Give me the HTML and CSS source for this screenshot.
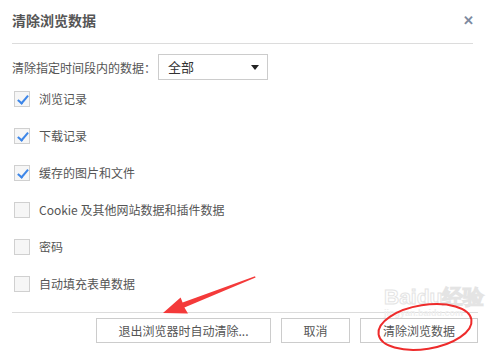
FILE: index.html
```html
<!DOCTYPE html>
<html>
<head>
    <title>清除浏览数据</title>
    <link rel="stylesheet" href="styles.css">
</head>
<body>
    <div class="dialog">
        <header class="head">
            <h1>清除浏览数据</h1>
            <span class="close">&#x2715;</span>
        </header>
        <div class="range">
            <span>清除指定时间段内的数据：</span>
            <div class="select">全部<span class="caret"></span></div>
        </div>
        <ul class="opts">
            <li><span class="box on"></span>浏览记录</li>
            <li><span class="box on"></span>下载记录</li>
            <li><span class="box on"></span>缓存的图片和文件</li>
            <li><span class="box"></span>Cookie 及其他网站数据和插件数据</li>
            <li><span class="box"></span>密码</li>
            <li><span class="box"></span>自动填充表单数据</li>
        </ul>
        <footer class="foot">
            <button class="btn wide">退出浏览器时自动清除...</button>
            <button class="btn">取消</button>
            <button class="btn main">清除浏览数据</button>
        </footer>
    </div>

    <!-- annotations drawn over the screenshot -->
    <div class="mark">Baidu经验<small>jingyan.baidu.com</small></div>
    <svg class="ink" width="489" height="354" viewBox="0 0 489 354">
        <polygon fill="#f43a3a" points="163,313 180.6,297.6 182.6,302.5 255,276.3 255.6,277.6 184.4,307.5 188,313.5"/>
        <ellipse cx="425" cy="327" rx="47" ry="22" fill="none" stroke="#ee2b2b" stroke-width="2" transform="rotate(-9 425 327)"/>
    </svg>
</body>
</html>
```

FILE: styles.css
```css
body, html {
    margin: 0;
    padding: 0;
    background: #fff;
    font-family: "Noto Sans CJK SC", "Noto Sans", sans-serif;
    font-size: 12px;
    color: #555;
}
.dialog {
    padding: 0 16px 0 12px;
}
.head {
    display: flex;
    align-items: center;
    justify-content: space-between;
    height: 43px;
    border-bottom: 1px solid #dcdcdc;
}
.head h1 {
    margin: -4px 0 0;
    font-size: 14px;
    font-weight: bold;
    color: #555;
}
.close {
    margin: -4px -1px 0 0;
    color: #7d8aa0;
    font-size: 13px;
    font-weight: bold;
}
.range {
    display: flex;
    align-items: center;
    margin-top: 10px;
}
.range span {
    margin-right: 2px;
}
.select {
    position: relative;
    box-sizing: border-box;
    width: 110px;
    height: 26px;
    line-height: 24px;
    padding-left: 9px;
    border: 1px solid #ccc;
    font-size: 13px;
    color: #333;
}
.caret {
    position: absolute;
    right: 6px;
    top: 10px;
    border-left: 4px solid transparent;
    border-right: 4px solid transparent;
    border-top: 5px solid #222;
}
.opts {
    list-style: none;
    margin: 0;
    padding: 0;
}
.opts li {
    display: flex;
    align-items: center;
    height: 37px;
}
.box {
    position: relative;
    box-sizing: border-box;
    width: 16px;
    height: 16px;
    margin: 0 9px 0 2px;
    border: 1px solid #d0d0d0;
    background: #f6f6f6;
}
.box.on::after {
    content: "";
    position: absolute;
    left: 5px;
    top: 1px;
    width: 4px;
    height: 9px;
    border: solid #3d86e8;
    border-width: 0 2px 2px 0;
    transform: rotate(40deg);
}
.foot {
    display: flex;
    justify-content: flex-end;
    gap: 10px;
    margin-top: 10px;
    margin-right: -5px;
    padding-top: 5px;
    border-top: 1px solid #dcdcdc;
}
.btn {
    width: 69px;
    height: 25px;
    padding: 0;
    border: 1px solid #ccc;
    background: #fff;
    font-family: inherit;
    font-size: 12px;
    color: #555;
}
.btn.wide {
    width: 175px;
}
.btn.main {
    width: 118px;
}
.mark {
    position: absolute;
    left: 384px;
    top: 286px;
    font: bold 21px "Liberation Sans", sans-serif;
    line-height: 22px;
    color: transparent;
    -webkit-text-stroke: 1px #e4e4e4;
}
.mark small {
    display: block;
    font-size: 9px;
    line-height: 10px;
    -webkit-text-stroke: 0;
    color: #eee;
}
.ink {
    position: absolute;
    left: 0;
    top: 0;
    pointer-events: none;
}
```
